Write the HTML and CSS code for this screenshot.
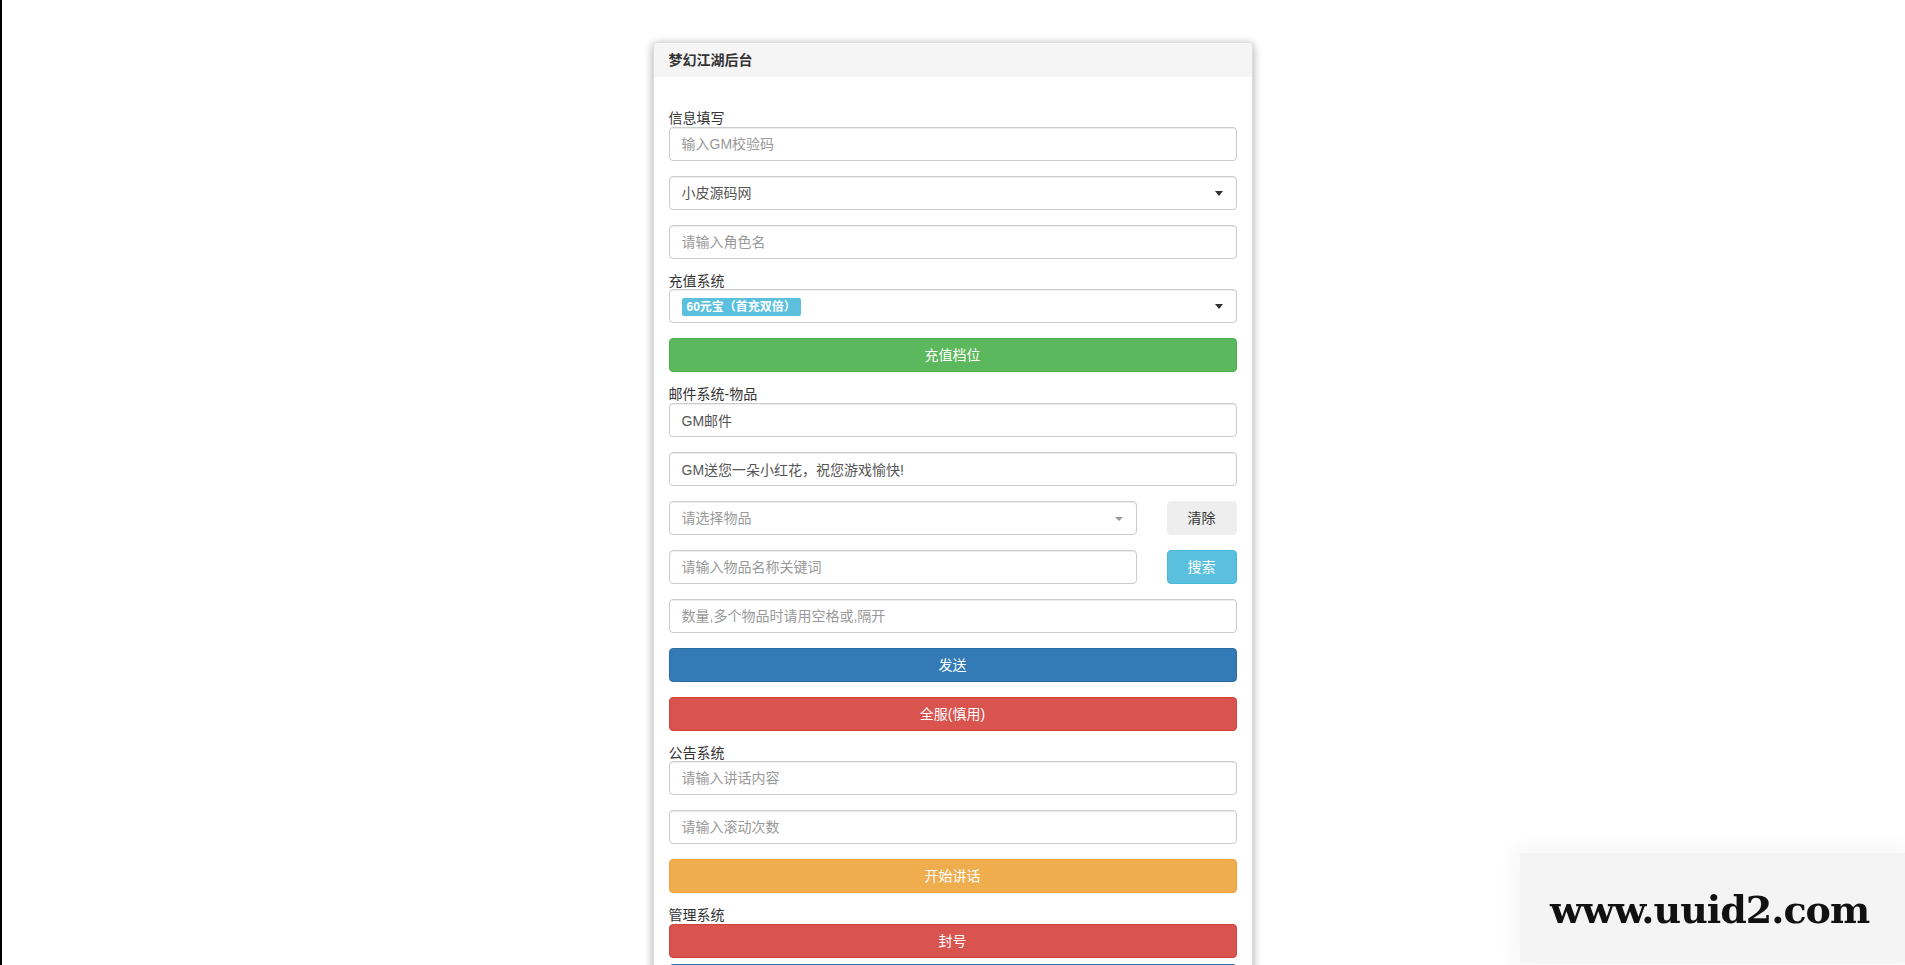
FILE: index.html
```html
<!DOCTYPE html>
<html lang="zh-CN">
<head>
    <meta charset="UTF-8">
    <meta name="viewport" content="width=device-width, initial-scale=1.0">
    <title>梦幻江湖后台</title>
    <link rel="stylesheet" href="styles.css">
</head>
<body>

<div class="wrap">
    <div class="panel">
        <div class="panel-heading">梦幻江湖后台</div>
        <div class="panel-body">

            <!-- 信息填写 -->
            <label>信息填写</label>
            <div class="form-group">
                <input type="text" class="form-control" placeholder="输入GM校验码">
            </div>
            <div class="form-group">
                <div class="select-box dark">小皮源码网</div>
            </div>
            <div class="form-group">
                <input type="text" class="form-control" placeholder="请输入角色名">
            </div>

            <!-- 充值系统 -->
            <label>充值系统</label>
            <div class="form-group">
                <div class="select-box dark">
                    <span class="choice">60元宝（首充双倍）</span>
                </div>
            </div>
            <div class="form-group">
                <button class="btn btn-success">充值档位</button>
            </div>

            <!-- 邮件系统 -->
            <label>邮件系统-物品</label>
            <div class="form-group">
                <input type="text" class="form-control" value="GM邮件">
            </div>
            <div class="form-group">
                <input type="text" class="form-control" value="GM送您一朵小红花，祝您游戏愉快!">
            </div>
            <div class="form-group row">
                <div class="select-box light placeholder">请选择物品</div>
                <button class="btn btn-default">清除</button>
            </div>
            <div class="form-group row">
                <input type="text" class="form-control" placeholder="请输入物品名称关键词">
                <button class="btn btn-info">搜索</button>
            </div>
            <div class="form-group">
                <input type="text" class="form-control" placeholder="数量,多个物品时请用空格或,隔开">
            </div>
            <div class="form-group">
                <button class="btn btn-primary">发送</button>
            </div>
            <div class="form-group">
                <button class="btn btn-danger">全服(慎用)</button>
            </div>

            <!-- 公告系统 -->
            <label>公告系统</label>
            <div class="form-group">
                <input type="text" class="form-control" placeholder="请输入讲话内容">
            </div>
            <div class="form-group">
                <input type="text" class="form-control" placeholder="请输入滚动次数">
            </div>
            <div class="form-group">
                <button class="btn btn-warning">开始讲话</button>
            </div>

            <!-- 管理系统 -->
            <label>管理系统</label>
            <div class="btn-stack">
                <button class="btn btn-danger">封号</button>
                <button class="btn btn-primary"></button>
            </div>
        </div>
    </div>
</div>

<div class="watermark">www.uuid2.com</div>

</body>
</html>
```

FILE: styles.css
```css
html {
    box-shadow: inset 2px 0 0 #000;
    min-height: 100%;
}

body {
    margin: 0;
    color: #333;
    font-family: "Liberation Sans", "Noto Sans CJK SC", sans-serif;
    font-size: 14px;
    line-height: 1.2;
}

.wrap {
    padding-top: 42px;
    padding-bottom: 40px;
}

.panel {
    width: 598px;
    margin: 0 auto;
    background-color: #fff;
    border: 1px solid #ddd;
    border-radius: 4px;
    box-shadow: 0 2px 10px rgba(0, 0, 0, 0.35);
}

.panel-heading {
    background-color: #f5f5f5;
    padding: 9px 15px;
    line-height: 16px;
    font-weight: bold;
    color: #333;
    border-radius: 3px 3px 0 0;
}

.panel-body {
    padding: 34px 15px 15px;
}

label {
    display: block;
    line-height: 15.5px;
    color: #333;
}

.form-group {
    margin-bottom: 15px;
}

.row {
    display: grid;
    grid-template-columns: 1fr 70px;
    column-gap: 30px;
}

.form-control,
.select-box {
    display: block;
    box-sizing: border-box;
    width: 100%;
    height: 34px;
    padding: 6px 12px;
    font-family: inherit;
    font-size: 14px;
    line-height: 20px;
    color: #555;
    background-color: #fff;
    border: 1px solid #ccc;
    border-radius: 4px;
    box-shadow: inset 0 1px 1px rgba(0, 0, 0, 0.075);
    outline: none;
}

.form-control::placeholder {
    color: #999;
}

.select-box {
    position: relative;
}

.select-box.placeholder {
    color: #999;
}

.select-box::after {
    content: "";
    position: absolute;
    right: 13px;
    top: 14px;
    border-style: solid;
    border-width: 5px 4px 0 4px;
    border-color: #333 transparent transparent transparent;
}

.select-box.light::after {
    border-color: #999 transparent transparent transparent;
    border-width: 4px 4px 0 4px;
    top: 15px;
}

.choice {
    display: inline-block;
    background-color: #5bc0de;
    color: #fff;
    font-size: 12px;
    font-weight: bold;
    line-height: 18px;
    padding: 0 5px;
    border-radius: 2px;
    vertical-align: top;
    margin-top: 2px;
}

.btn {
    display: block;
    box-sizing: border-box;
    width: 100%;
    height: 34px;
    padding: 6px 12px;
    font-family: inherit;
    font-size: 14px;
    line-height: 20px;
    color: #fff;
    border: 1px solid transparent;
    border-radius: 4px;
    cursor: pointer;
}

.btn-default {
    background-color: #eee;
    border-color: #eee;
    color: #333;
}

.btn-success {
    background-color: #5cb85c;
    border-color: #4cae4c;
}

.btn-info {
    background-color: #5bc0de;
    border-color: #46b8da;
}

.btn-primary {
    background-color: #337ab7;
    border-color: #2e6da4;
}

.btn-danger {
    background-color: #d9534f;
    border-color: #d43f3a;
}

.btn-warning {
    background-color: #f0ad4e;
    border-color: #eea236;
}

.btn-stack .btn {
    margin-bottom: 6px;
}

/* 右下角水印 */
.watermark {
    position: fixed;
    right: 0;
    bottom: 2px;
    width: 385px;
    height: 110px;
    box-sizing: border-box;
    padding-left: 30px;
    line-height: 114px;
    background-color: #f4f4f4;
    box-shadow: 0 0 18px 6px #f6f6f6;
    font-family: "DejaVu Serif", serif;
    font-weight: bold;
    font-size: 38px;
    color: #111;
    letter-spacing: -1px;
}
```
